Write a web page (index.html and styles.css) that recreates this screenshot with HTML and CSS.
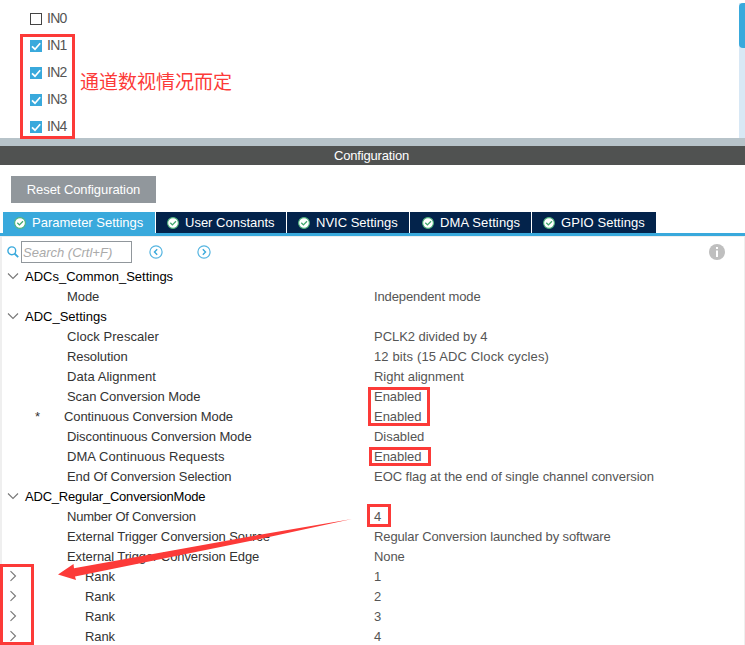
FILE: index.html
```html
<!DOCTYPE html>
<html lang="en">
<head>
<meta charset="utf-8">
<title>ADC Configuration</title>
<link rel="stylesheet" href="styles.css">
</head>
<body>
<svg class="defs" aria-hidden="true">
  <symbol id="tick" viewBox="0 0 12 12"><rect width="12" height="12" fill="#39a9dc"/><path d="M2 6.3 5 9.2 10.2 3.3" fill="none" stroke="#fff" stroke-width="1.7"/></symbol>
  <symbol id="ok" viewBox="0 0 12 12"><circle cx="6" cy="6" r="5.4" fill="#fff" stroke="#4fb47c" stroke-width="1.1"/><path d="M3.3 5.8 5.4 7.9 9 4.3" fill="none" stroke="#3fa66c" stroke-width="1.3"/></symbol>
  <symbol id="open" viewBox="0 0 12 8"><path d="M1 1.5 6 6.5 11 1.5" fill="none" stroke="#777" stroke-width="1.1"/></symbol>
  <symbol id="closed" viewBox="0 0 8 12"><path d="M1.5 1.2 6.5 6 1.5 10.8" fill="none" stroke="#777" stroke-width="1.1"/></symbol>
</svg>
<main class="app">
  <section class="channels">
    <ul class="channel-list">
      <li><span class="box"></span><span>IN0</span></li>
      <li><svg class="tick"><use href="#tick"/></svg><span>IN1</span></li>
      <li><svg class="tick"><use href="#tick"/></svg><span>IN2</span></li>
      <li><svg class="tick"><use href="#tick"/></svg><span>IN3</span></li>
      <li><svg class="tick"><use href="#tick"/></svg><span>IN4</span></li>
    </ul>
    <div class="scroll"><div class="thumb"></div></div>
  </section>
  <div class="splitter"></div>
  <h1 class="title">Configuration</h1>
  <div class="actions"><button class="reset">Reset Configuration</button></div>
  <nav class="tabs">
    <a class="tab tab-param active"><svg class="ok"><use href="#ok"/></svg><span>Parameter Settings</span></a>
    <a class="tab tab-user"><svg class="ok"><use href="#ok"/></svg><span>User Constants</span></a>
    <a class="tab tab-nvic"><svg class="ok"><use href="#ok"/></svg><span>NVIC Settings</span></a>
    <a class="tab tab-dma"><svg class="ok"><use href="#ok"/></svg><span>DMA Settings</span></a>
    <a class="tab tab-gpio"><svg class="ok"><use href="#ok"/></svg><span>GPIO Settings</span></a>
  </nav>
  <section class="panel">
    <div class="toolbar">
      <svg class="search-icon" viewBox="0 0 12 12"><circle cx="4.8" cy="4.8" r="3.9" fill="none" stroke="#39a9dc" stroke-width="1.4"/><path d="M7.5 7.5 11.2 11.2" stroke="#39a9dc" stroke-width="1.8"/></svg>
      <div class="search">Search (Crtl+F)</div>
      <svg class="nav prev" viewBox="0 0 14 14"><circle cx="7" cy="7" r="6.1" fill="none" stroke="#56b5e1" stroke-width="1.2"/><path d="M8.2 4.3 5.5 7 8.2 9.7" fill="none" stroke="#39a9dc" stroke-width="1.4"/></svg>
      <svg class="nav next" viewBox="0 0 14 14"><circle cx="7" cy="7" r="6.1" fill="none" stroke="#56b5e1" stroke-width="1.2"/><path d="M5.8 4.3 8.5 7 5.8 9.7" fill="none" stroke="#39a9dc" stroke-width="1.4"/></svg>
      <svg class="info" viewBox="0 0 16 16"><circle cx="8" cy="8" r="8" fill="#bfbfbf"/><path d="M8 3v2M8 6.5V13" fill="none" stroke="#fff" stroke-width="2"/></svg>
    </div>
    <div class="tree">
      <div class="group"><svg class="open"><use href="#open"/></svg><span>ADCs_Common_Settings</span></div>
      <div class="row"><span class="name">Mode</span><span class="value tight">Independent mode</span></div>
      <div class="group"><svg class="open"><use href="#open"/></svg><span>ADC_Settings</span></div>
      <div class="row"><span class="name loose">Clock Prescaler</span><span class="value">PCLK2 divided by 4</span></div>
      <div class="row"><span class="name">Resolution</span><span class="value wide">12 bits (15 ADC Clock cycles)</span></div>
      <div class="row"><span class="name loose">Data Alignment</span><span class="value">Right alignment</span></div>
      <div class="row"><span class="name">Scan Conversion Mode</span><span class="value">Enabled</span></div>
      <div class="row changed"><span class="star">*</span><span class="name">Continuous Conversion Mode</span><span class="value">Enabled</span></div>
      <div class="row"><span class="name">Discontinuous Conversion Mode</span><span class="value">Disabled</span></div>
      <div class="row"><span class="name loose">DMA Continuous Requests</span><span class="value">Enabled</span></div>
      <div class="row"><span class="name">End Of Conversion Selection</span><span class="value">EOC flag at the end of single channel conversion</span></div>
      <div class="group"><svg class="open"><use href="#open"/></svg><span class="condensed">ADC_Regular_ConversionMode</span></div>
      <div class="row"><span class="name condensed">Number Of Conversion</span><span class="value">4</span></div>
      <div class="row"><span class="name">External Trigger Conversion Source</span><span class="value tight">Regular Conversion launched by software</span></div>
      <div class="row"><span class="name">External Trigger Conversion Edge</span><span class="value tight">None</span></div>
      <div class="row rank"><svg class="closed"><use href="#closed"/></svg><span class="name">Rank</span><span class="value">1</span></div>
      <div class="row rank"><svg class="closed"><use href="#closed"/></svg><span class="name">Rank</span><span class="value">2</span></div>
      <div class="row rank"><svg class="closed"><use href="#closed"/></svg><span class="name">Rank</span><span class="value">3</span></div>
      <div class="row rank"><svg class="closed"><use href="#closed"/></svg><span class="name">Rank</span><span class="value">4</span></div>
    </div>
  </section>
  <div class="mark mark-channels"></div>
  <div class="note">通道数视情况而定</div>
  <div class="mark mark-modes"></div>
  <div class="mark mark-dma"></div>
  <div class="mark mark-count"></div>
  <div class="mark mark-ranks"></div>
  <svg class="arrow" viewBox="0 0 300 70"><path d="M8 64.5 23.5 54 24 58.3 200 26.5 302 9 200 31 25 66.5 26 70Z" fill="#fc3a38"/></svg>
</main>
</body>
</html>
```

FILE: styles.css
```css
* { box-sizing: border-box; }
body { margin: 0; background: #fff; font: 13px/20px "Liberation Sans", Arial, sans-serif; color: #333; }
.defs { position: absolute; width: 0; height: 0; }
.app { position: relative; width: 745px; height: 645px; overflow: hidden; white-space: nowrap; }
svg { display: block; flex: none; }

.channels { display: flex; justify-content: space-between; height: 138px; }
.channel-list { list-style: none; margin: 0; padding: 5px 0 0 30px; color: #555; font-size: 14px; letter-spacing: -.75px; }
.channel-list li { display: flex; align-items: center; gap: 5px; height: 27px; }
.channel-list li span:last-child { padding-bottom: 2px; }
.box { width: 12px; height: 12px; border: 1px solid #444; background: #fff; }
.tick { width: 12px; height: 12px; }
.box, .tick { position: relative; top: .5px; }
.scroll { width: 6px; padding-top: 3px; background: linear-gradient(#fff 3px, #d8e8f5 3px); overflow: hidden; }
.thumb { width: 10px; height: 45px; border-radius: 4px; background: #39a9dc; }
.splitter { height: 8px; background: #b7c3c9; }
.title { margin: 0; height: 19px; background: #505251; color: #fff; font-size: 13px; font-weight: 400; line-height: 19px; text-align: center; padding-right: 2px; letter-spacing: -.18px; }

.actions { padding: 11px 0 9px 11px; }
.reset { display: block; width: 145px; height: 27px; padding: 0; border: 0; background: #91979c; color: #fff; font: 13px "Liberation Sans", Arial, sans-serif; letter-spacing: -.08px; }

.tabs { display: flex; gap: 1px; padding-left: 3px; height: 24px; border-bottom: 3px solid #39a9dc; }
.tab { display: flex; align-items: center; gap: 6px; padding-left: 11px; background: #03234b; color: #fff; }
.tab.active { background: #39a9dc; }
.ok { width: 12px; height: 12px; }
.tab-param { width: 152px; }
.tab-user { width: 130px; }
.tab-nvic { width: 122px; }
.tab-dma { width: 121px; padding-left: 12px; letter-spacing: .12px; }
.tab-gpio { width: 124px; letter-spacing: .06px; }

.panel { height: 409px; border: solid #efefef; border-width: 1px 1px 0 2px; }
.toolbar { display: flex; align-items: center; height: 29px; padding: 1px 19px 0 5px; }
.search-icon { width: 12px; height: 12px; margin-right: 2px; }
.search { width: 111px; height: 22px; padding-left: 1px; border: 1px solid #91979c; color: #aaa; font-style: italic; font-size: 13px; line-height: 21px; }
.nav { width: 14px; height: 14px; }
.prev { margin-left: 17px; }
.next { margin-left: 34px; }
.info { width: 16px; height: 16px; margin-left: auto; }

.group, .row { display: flex; align-items: center; height: 20px; }
.group { padding-left: 5px; color: #000; }
.group span, .row span { padding-top: 2px; }
.open { width: 12px; height: 8px; margin-right: 6px; }
.row { padding-left: 65px; }
.name { width: 307px; letter-spacing: -.09px; }
.value { color: #555; letter-spacing: -.04px; }
.loose { letter-spacing: .06px; }
.wide { letter-spacing: .13px; }
.tight { letter-spacing: -.12px; }
.condensed { letter-spacing: -.21px; }
.changed { padding-left: 33px; }
.changed .star { width: 29px; }
.changed .name { width: 310px; }
.rank { padding-left: 7px; }
.closed { width: 8px; height: 12px; margin-right: 68px; }
.rank .name { width: 289px; }

.mark { position: absolute; border: 3px solid #fc3a38; }
.mark-channels { left: 20px; top: 34px; width: 55px; height: 105px; }
.mark-modes { left: 368px; top: 387px; width: 62px; height: 39px; }
.mark-dma { left: 369px; top: 447px; width: 62px; height: 19px; }
.mark-count { left: 367px; top: 504px; width: 24px; height: 23px; }
.mark-ranks { left: 0; top: 564px; width: 34px; height: 81px; }
.note { position: absolute; left: 80px; top: 67px; color: #fc3a38; font: 400 19px/28px "Noto Sans CJK SC", sans-serif; }
.arrow { position: absolute; left: 50px; top: 510px; width: 300px; height: 70px; overflow: visible; }
```
